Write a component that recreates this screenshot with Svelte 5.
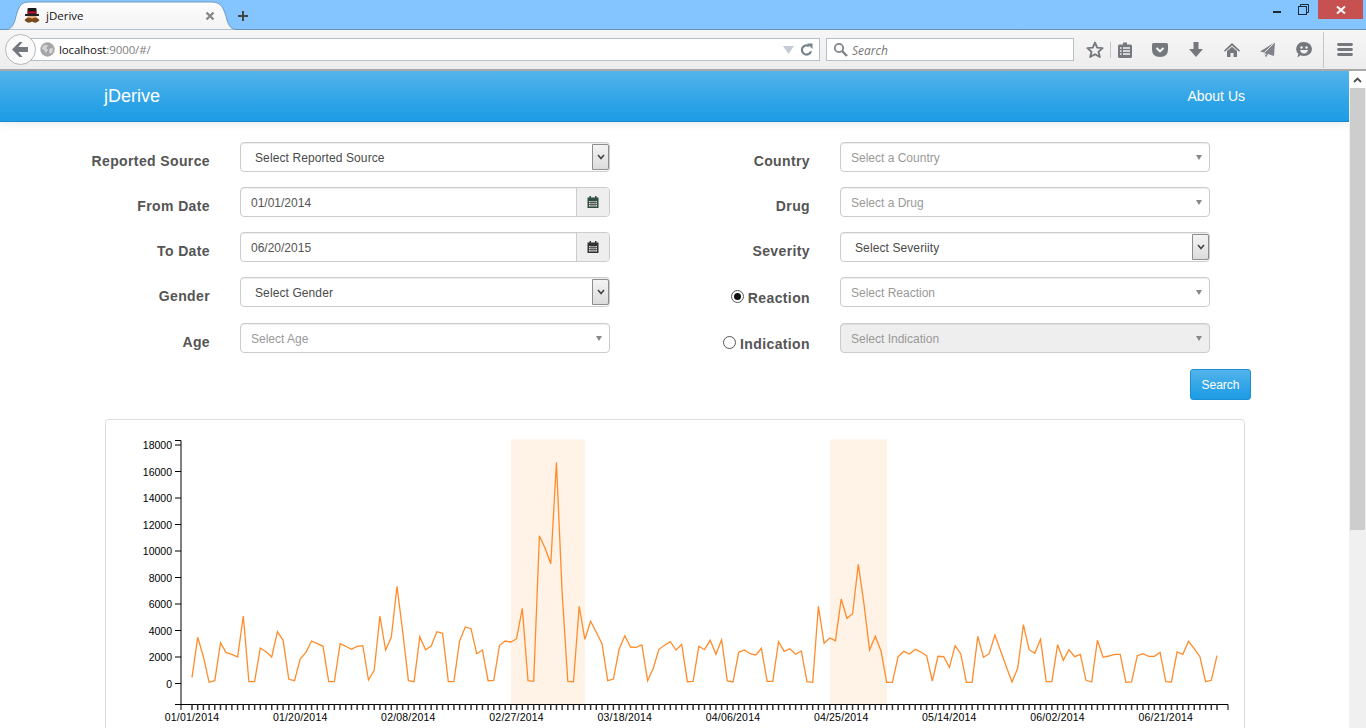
<script>
  const raw = [787,667,725,802,797,684,713,718,726,603,800,800,699,710,726,650,676,793,797,732,712,678,686,694,800,800,686,694,703,694,692,795,766,603,705,667,514,650,797,800,665,704,693,650,
  655,800,800,678,636,641,716,705,797,796,691,678,681,671,580,797,799,362,400,446,142,530,799,800,574,673,619,652,686,797,792,703,662,696,697,690,797,760,703,691,680,705,688,800,799,694,704,676,718,674,798,801,712,705,716,720,700,799,799,680,
  709,701,718,708,800,802,574,685,669,677,552,610,596,448,565,705,664,708,802,802,725,709,717,703,711,722,798,724,725,757,692,717,802,802,664,727,716,660,707,755,801,760,629,704,715,673,800,800,689,736,704,725,718,796,801,676,727,723,718,718,802,801,722,716,724,724,712,800,801,711,718,679,701,725,800,796,722];
  const step = (1217 - 192) / 180;
  const linePoints = raw.map((v, i) => `${(192 + step * i).toFixed(1)},${(415 + v / 3).toFixed(1)}`).join(' ');
  const ticksX = raw.map((_, i) => 192 + step * i);
  const yLabels = [18000,16000,14000,12000,10000,8000,6000,4000,2000,0].map((v) => ({ v, y: 683.5 - (v / 18000) * 238.5 }));
  const xLabels = ['01/01/2014','01/20/2014','02/08/2014','02/27/2014','03/18/2014','04/06/2014','04/25/2014','05/14/2014','06/02/2014','06/21/2014']
    .map((t, i) => ({ t, x: 192 + step * 19 * i }));
</script>

<div class="app">
  <div class="titlebar">
    <div class="tab">
      <svg class="tabshape" width="240" height="30" viewBox="0 0 240 30">
        <defs><linearGradient id="tg" x1="0" y1="0" x2="0" y2="1"><stop offset="0" stop-color="#fdfdfd"/><stop offset="1" stop-color="#f3f3f3"/></linearGradient></defs>
        <path d="M0 29.5C5 29.5 8 27 10 20C13 8 15 2 24 2L207 2C216 2 219 8 222 20C224 27 227 29.5 232 29.5" fill="url(#tg)" stroke="#6f9ac0"/>
      </svg>
      <svg class="favicon" width="16" height="16" viewBox="0 0 16 16">
        <path d="M3.5 1Q3.5 0 4.5 0H11.5Q12.5 0 12.5 1V6H3.5Z" fill="#161616"/>
        <rect x="3.5" y="3.5" width="9" height="2" fill="#c8102e"/>
        <rect x="1" y="6" width="14" height="2" fill="#222"/>
        <rect x="3" y="8" width="10" height="6" rx="2" fill="#e6ad80"/>
        <path d="M.5 12C3 9 6 9.5 8 10.7C10 9.5 13 9 15.5 12C13 15.5 10 15 8 13.5C6 15 3 15.5 .5 12Z" fill="#7a4a1e"/>
      </svg>
      <span class="tabtitle">jDerive</span>
      <svg class="tabclose" width="10" height="10" viewBox="0 0 10 10"><path d="M1.5 1.5L8.5 8.5M8.5 1.5L1.5 8.5" stroke="#85888c" stroke-width="2.4"/></svg>
    </div>
    <svg class="newtab" width="12" height="12" viewBox="0 0 12 12"><path d="M6 1V11M1 6H11" stroke="#444" stroke-width="2"/></svg>
    <div class="winctl">
      <span class="min"></span>
      <svg class="restore" width="11" height="11" viewBox="0 0 11 11"><path d="M2.5 2.5V.5H10.5V8.5H8.5" fill="none" stroke="#1a2a3a"/><rect x=".5" y="2.5" width="8" height="8" fill="none" stroke="#1a2a3a" stroke-width="1"/></svg>
      <div class="close"><svg width="10" height="10" viewBox="0 0 10 10"><path d="M1 1.5L9 8.5M9 1.5L1 8.5" stroke="#fff" stroke-width="2"/></svg></div>
    </div>
  </div>

  <div class="toolbar">
    <div class="back">
      <svg width="17" height="15" viewBox="0 0 16 14"><path d="M7 0L0 7L7 14H10L6 9.3H15V4.7H6L10 0Z" fill="#74797f"/></svg>
    </div>
    <div class="urlbar">
      <svg class="globe" width="15" height="15" viewBox="0 0 15 15"><circle cx="7.5" cy="7.5" r="7.2" fill="#a4a6a8"/><path d="M3 4L6 2.5L8 4L6 6L8 8L6 11L4 8L2 6.5ZM10 6L13 6.5L12.5 10L10 12L9 9Z" fill="#d4d5d6"/></svg>
      <span class="url">localhost<span class="urlmuted">:9000/#/</span></span>
      <svg class="urldrop" width="11" height="8" viewBox="0 0 11 8"><path d="M0 0H11L5.5 8Z" fill="#c6ccd3"/></svg>
      <svg class="reload" width="13" height="13" viewBox="0 0 13 13"><path d="M11 8.2A4.6 4.6 0 1 1 9 3" fill="none" stroke="#75838f" stroke-width="2.2"/><path d="M7 .5H12.5V6Z" fill="#75838f"/></svg>
    </div>
    <div class="searchbar">
      <svg width="15" height="15" viewBox="0 0 15 15"><circle cx="6" cy="6" r="4.2" fill="none" stroke="#7f8387" stroke-width="1.8"/><path d="M9 9L14 14" stroke="#7f8387" stroke-width="2.4"/></svg>
      <span class="searchtext">Search</span>
    </div>
    <div class="icons">
      <div class="slot s30"><svg width="18" height="18" viewBox="0 0 18 18"><path d="M9 1.6L11.2 6.6L16.6 7.1L12.5 10.7L13.8 16L9 13.2L4.2 16L5.5 10.7L1.4 7.1L6.8 6.6Z" fill="none" stroke="#75797e" stroke-width="1.9" stroke-linejoin="round"/></svg></div>
      <span class="sep short"></span>
      <div class="slot s28"><svg width="14" height="16" viewBox="0 0 14 16"><path d="M1.5 2.5H5V.5H9V2.5H12.5Q14 2.5 14 4V14.5Q14 16 12.5 16H1.5Q0 16 0 14.5V4Q0 2.5 1.5 2.5Z" fill="#75797e"/><path d="M2 6H3.5M5 6H12M2 9H3.5M5 9H12M2 12H3.5M5 12H12" stroke="#f3f3f3" stroke-width="1.4"/></svg></div>
      <div class="slot s42"><svg width="16" height="14" viewBox="0 0 16 14"><path d="M1.5 0H14.5Q16 0 16 1.5V6.5Q16 14 8 14Q0 14 0 6.5V1.5Q0 0 1.5 0Z" fill="#75797e"/><path d="M4.5 5L8 8.3L11.5 5" fill="none" stroke="#f3f3f3" stroke-width="2.2"/></svg></div>
      <div class="slot s30"><svg width="14" height="15" viewBox="0 0 14 15"><path d="M4.5 0H9.5V7H14L7 15L0 7H4.5Z" fill="#75797e"/></svg></div>
      <div class="slot s42"><svg width="16" height="14" viewBox="0 0 16 14"><path d="M8 0L16 7.5L15 8.7L8 2.6L1 8.7L0 7.5Z" fill="#75797e"/><path d="M3 8L8 3.8L13 8V14H9.5V10H6.5V14H3Z" fill="#75797e"/></svg></div>
      <div class="slot s28"><svg width="15" height="16" viewBox="0 0 15 16"><path d="M15 0L0 9.5L4 10.5L6 15.5L8 12L14 14Z" fill="#80848a"/><path d="M15 0L4.5 10.5L6 13" fill="none" stroke="#f3f3f3" stroke-width=".9"/></svg></div>
      <div class="slot s42 shift"><svg width="16" height="16" viewBox="0 0 16 16"><path d="M8 0A8 7 0 0 1 8 14Q5.5 14 4.5 13.3L1.5 15.5L2.3 11.8A7.5 7 0 0 1 8 0Z" fill="#75797e"/><circle cx="5.5" cy="5.5" r="1.2" fill="#f3f3f3"/><circle cx="10.5" cy="5.5" r="1.2" fill="#f3f3f3"/><path d="M4 8H12Q11 11.5 8 11.5Q5 11.5 4 8Z" fill="#f3f3f3"/></svg></div>
      <span class="sep tall"></span>
      <div class="slot s42"><svg width="16" height="13" viewBox="0 0 16 13"><path d="M1.5 1.5H14.5M1.5 6.5H14.5M1.5 11.5H14.5" stroke="#75797e" stroke-width="2.8" stroke-linecap="round"/></svg></div>
    </div>
  </div>

  <div class="viewport">
    <div class="page">
      <nav class="navbar"><span class="brand">jDerive</span><span class="about">About Us</span></nav>

      <div class="form">
        <div class="lbl">Reported Source</div>
        <div class="ctl native">Select Reported Source<span class="selbtn"><svg width="8" height="6" viewBox="0 0 8 6"><path d="M1 1L4 4.5L7 1" fill="none" stroke="#444" stroke-width="1.6"/></svg></span></div>
        <div class="lbl">Country</div>
        <div class="ctl chosen">Select a Country<i class="caret"></i></div>

        <div class="lbl">From Date</div>
        <div class="ctl date">01/01/2014<span class="addon"><svg width="12" height="12" viewBox="0 0 11 12"><path d="M2 0H3.5V1.5H7.5V0H9V1.5H11V12H0V1.5H2Z" fill="#2f4f3f"/><path d="M1.5 5H9.5V10.5H1.5Z" fill="#d9dcd9"/><path d="M1.5 6.5H9.5M1.5 8.5H9.5M3.5 5V10.5M5.5 5V10.5M7.5 5V10.5" stroke="#555" stroke-width=".9"/></svg></span></div>
        <div class="lbl">Drug</div>
        <div class="ctl chosen">Select a Drug<i class="caret"></i></div>

        <div class="lbl">To Date</div>
        <div class="ctl date">06/20/2015<span class="addon"><svg width="12" height="12" viewBox="0 0 11 12"><path d="M2 0H3.5V1.5H7.5V0H9V1.5H11V12H0V1.5H2Z" fill="#333"/><path d="M1.5 5H9.5V10.5H1.5Z" fill="#d9dcd9"/><path d="M1.5 6.5H9.5M1.5 8.5H9.5M3.5 5V10.5M5.5 5V10.5M7.5 5V10.5" stroke="#555" stroke-width=".9"/></svg></span></div>
        <div class="lbl">Severity</div>
        <div class="ctl native">Select Severiity<span class="selbtn"><svg width="8" height="6" viewBox="0 0 8 6"><path d="M1 1L4 4.5L7 1" fill="none" stroke="#444" stroke-width="1.6"/></svg></span></div>

        <div class="lbl">Gender</div>
        <div class="ctl native">Select Gender<span class="selbtn"><svg width="8" height="6" viewBox="0 0 8 6"><path d="M1 1L4 4.5L7 1" fill="none" stroke="#444" stroke-width="1.6"/></svg></span></div>
        <div class="lbl radiolbl"><span class="radio on"></span>Reaction</div>
        <div class="ctl chosen">Select Reaction<i class="caret"></i></div>

        <div class="lbl last">Age</div>
        <div class="ctl chosen last">Select Age<i class="caret"></i></div>
        <div class="lbl radiolbl last"><span class="radio"></span>Indication</div>
        <div class="ctl chosen disabled last">Select Indication<i class="caret"></i></div>
      </div>

      <button class="search" type="button">Search</button>

      <div class="panel">
        <svg class="chart" width="1138" height="320" viewBox="106 420 1138 320">
          <rect x="511" y="439.5" width="74" height="265" fill="#fff2e6"/>
          <rect x="830" y="439.5" width="57" height="265" fill="#fff2e6"/>
          <polyline points={linePoints} fill="none" stroke="#ff8c2b" stroke-width="1.3"/>
          <path d="M175 440.5H181V704.5H1228V710M181 704.5V710M175 704.5H181" fill="none" stroke="#000"/>
          {#each ticksX as x}
            <line x1={x} x2={x} y1="704.5" y2="710" stroke="#333" stroke-width="1.5"/>
          {/each}
          {#each yLabels as l}
            <line x1="175" x2="181" y1={l.y} y2={l.y} stroke="#000"/>
            <text class="axis" x="172" y={l.y + 4} text-anchor="end">{l.v}</text>
          {/each}
          {#each xLabels as l}
            <text class="axis xaxis" x={l.x} y="721" text-anchor="middle">{l.t}</text>
          {/each}
        </svg>
      </div>
    </div>

    <div class="scrollbar">
      <div class="scrollup"><svg width="9" height="6" viewBox="0 0 9 6"><path d="M1 5L4.5 1.5L8 5" fill="none" stroke="#505050" stroke-width="1.8"/></svg></div>
      <div class="thumb"></div>
    </div>
  </div>
</div>

<style>
  :global(body) { margin: 0; }
  .app { width: 1366px; height: 728px; overflow: hidden; display: flex; flex-direction: column; font-family: "Liberation Sans", Arial, sans-serif; background: #fff; }

  .titlebar { height: 29px; flex: none; background: #85c5ff; display: flex; align-items: flex-start; position: relative; z-index: 1; }
  .tab { width: 223px; height: 30px; margin-left: 5px; position: relative; display: flex; align-items: center; flex: none; }
  .tabshape { position: absolute; left: 0; top: 0; }
  .favicon { position: relative; margin: 1px 0 0 19px; flex: none; }
  .tabtitle { position: relative; margin: 1px 0 0 6px; font: 11.5px "Open Sans", sans-serif; color: #111; flex: 1; }
  .tabclose { position: relative; margin: 1px 13px 0 0; flex: none; }
  .newtab { margin: 10px 0 0 9px; flex: none; }
  .winctl { margin-left: auto; display: flex; align-items: flex-start; }
  .min { width: 8px; height: 2px; background: #1a2a3a; margin: 11px 17px 0 0; }
  .restore { margin: 4px 9px 0 0; }
  .close { width: 45px; height: 19px; margin-right: 3px; background: #c75050; display: flex; align-items: center; justify-content: center; }

  .toolbar { height: 42px; flex: none; box-sizing: border-box; background: linear-gradient(#f6f6f6, #ededed); border-top: 1px solid #6c93b5; border-bottom: 2px solid #a9a9a9; display: flex; align-items: center; position: relative; }
  .back { width: 29px; height: 29px; margin-left: 5px; border: 1px solid #b5b8bb; border-radius: 50%; background: #fafafa; display: flex; align-items: center; justify-content: center; position: relative; z-index: 1; flex: none; }
  .urlbar { width: 789px; height: 23px; margin-left: -5px; box-sizing: border-box; background: #fff; border: 1px solid #b7c0ca; display: flex; align-items: center; padding-left: 8px; flex: none; }
  .url { margin-left: 4px; font: 11.5px "Open Sans", sans-serif; color: #111; letter-spacing: -0.1px; flex: 1; }
  .urlmuted { color: #808080; }
  .urldrop { margin-right: 6px; flex: none; }
  .reload { margin-right: 6px; flex: none; }
  .searchbar { width: 248px; height: 23px; margin-left: 6px; box-sizing: border-box; background: #fff; border: 1px solid #b7c0ca; display: flex; align-items: center; padding-left: 6px; gap: 4px; flex: none; font: italic 12px "Open Sans", sans-serif; color: #777; }
  .searchtext { padding-top: 1px; }
  .icons { display: flex; align-items: center; margin-left: 6px; flex: none; height: 100%; }
  .slot { height: 100%; display: flex; align-items: center; justify-content: center; box-sizing: border-box; flex: none; }
  .s28 { width: 28px; } .s30 { width: 30px; } .s42 { width: 42px; }
  .shift { padding-left: 4px; }
  .sep { width: 1px; flex: none; background: #c4c7ca; }
  .sep.short { height: 16px; }
  .sep.tall { height: 36px; }

  .viewport { flex: 1; display: flex; min-height: 0; }
  .page { flex: 1; min-width: 0; }
  .scrollbar { width: 17px; flex: none; background: #f0f0f0; display: flex; flex-direction: column; }
  .scrollup { height: 17px; background: #fff; display: flex; align-items: center; justify-content: center; }
  .thumb { height: 442px; margin: 0 1px; background: #cdcdcd; }

  .navbar { height: 51px; box-sizing: border-box; padding: 0 104px; background: linear-gradient(#54b4eb, #2fa4e7 60%, #1d9ce5); border-bottom: 1px solid #178acc; box-shadow: 0 1px 10px rgba(0,0,0,.1); display: flex; align-items: center; justify-content: space-between; color: #fff; }
  .brand { font-size: 18px; }
  .about { font-size: 14px; }

  .form { margin-top: 20px; display: grid; grid-template-columns: 210px 370px 170px 370px; column-gap: 30px; row-gap: 15px; grid-auto-rows: 30px; color: #555; }
  .lbl { font-size: 14px; font-weight: bold; letter-spacing: .38px; text-align: right; padding-top: 11px; line-height: 16px; white-space: nowrap; }
  .radiolbl { display: flex; justify-content: flex-end; align-items: center; padding-top: 13px; height: 16px; }
  .radio { width: 11px; height: 11px; border: 1px solid #555; border-radius: 50%; margin-right: 4px; margin-top: -3px; background: #fff; position: relative; display: block; }
  .radio.on::after { content: ""; position: absolute; inset: 2px; background: #111; border-radius: 50%; }
  .last { margin-top: 1px; }
  .ctl { box-sizing: border-box; height: 30px; border: 1px solid #ccc; border-radius: 4px; background: #fff; box-shadow: inset 0 1px 1px rgba(0,0,0,.075); font-size: 12px; line-height: 30px; color: #555; position: relative; white-space: nowrap; }
  .native { padding-left: 14px; color: #4a4a4a; letter-spacing: .1px; }
  .selbtn { position: absolute; right: 0; top: 1px; width: 17px; height: 26px; background: linear-gradient(#f4f4f4, #dcdcdc); border: 1px solid #8d8d8d; box-sizing: border-box; display: flex; align-items: center; justify-content: center; border-radius: 0 2px 2px 0; }
  .date { padding-left: 10px; }
  .addon { position: absolute; right: 0; top: 0; width: 33px; height: 28px; background: #eee; border-left: 1px solid #ccc; border-radius: 0 3px 3px 0; display: flex; align-items: center; justify-content: center; box-sizing: border-box; }
  .chosen { padding-left: 10px; color: #999; }
  .disabled { background: #eee; }
  .caret { position: absolute; right: 7px; top: 12px; width: 0; height: 0; border-left: 3px solid transparent; border-right: 3px solid transparent; border-top: 5px solid #888; }

  .search { display: block; margin: 17px 0 0 1190px; width: 61px; height: 31px; padding: 0; border: 1px solid #1a8fd6; border-radius: 3px; background: linear-gradient(#54b4eb, #2fa4e7 60%, #1d9ce5); color: #fff; font: 12px "Liberation Sans", Arial, sans-serif; }

  .panel { margin: 19px 0 0 105px; width: 1140px; height: 330px; box-sizing: border-box; border: 1px solid #ddd; border-radius: 4px; background: #fff; }
  .chart { display: block; }
  .axis { font: 10.5px "Liberation Sans", Arial, sans-serif; fill: #000; }
  .xaxis { letter-spacing: .2px; }
</style>
